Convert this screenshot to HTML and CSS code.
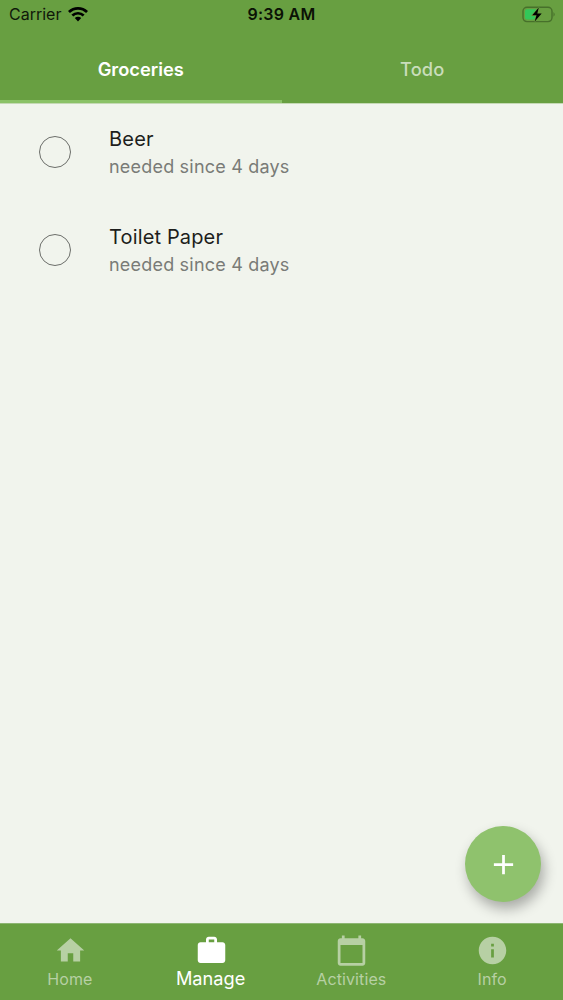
FILE: index.html
```html
<!DOCTYPE html>
<html lang="en">
<head>
<meta charset="utf-8">
<title>Groceries</title>
<link rel="stylesheet" href="styles.css">
</head>
<body>
<div class="app">
  <header class="header">
    <div class="status">
      <div class="carrier"><span class="carrier-name">Carrier</span>
        <svg class="wifi" viewBox="0 0 20 15"><path d="M0 4.1A14.3 14.3 0 0 1 20 4.1L18.1 6.1A11.5 11.5 0 0 0 1.9 6.1ZM3.4 7.6A9.5 9.5 0 0 1 16.6 7.6L14.7 9.5A6.7 6.7 0 0 0 5.3 9.5ZM6.8 11A4.6 4.6 0 0 1 13.2 11L10 14.5Z"/></svg>
      </div>
      <div class="clock">9:39 AM</div>
      <svg class="battery" viewBox="0 0 34 18"><rect class="battery-case" x="1" y="2.2" width="29" height="14.4" rx="4"/><rect class="battery-level" x="3" y="4.2" width="12" height="10.4" rx="2"/><path class="battery-tip" d="M31.5 7q2.4 2.4 0 4.8z"/><path class="bolt" d="M16.8 2.6 10.2 10.3h4.3l-1.8 6.1 7-7.9h-4.4z"/></svg>
    </div>
    <nav class="tabs"><a class="tab tab-active">Groceries</a><a class="tab">Todo</a></nav>
  </header>
  <main class="list">
    <div class="item"><span class="circle"></span><div><div class="title">Beer</div><div class="note">needed since 4 days</div></div></div>
    <div class="item"><span class="circle"></span><div><div class="title title-long">Toilet Paper</div><div class="note">needed since 4 days</div></div></div>
    <button class="fab" aria-label="Add"><svg viewBox="0 0 24 24"><path d="M19 13h-6v6h-2v-6H5v-2h6V5h2v6h6z"/></svg></button>
  </main>
  <nav class="bottom">
    <a class="dest"><svg viewBox="0 0 24 24"><path d="M10 20v-6h4v6h5v-8h3L12 3 2 12h3v8z"/></svg><span>Home</span></a>
    <a class="dest dest-active"><svg viewBox="0 0 24 24"><path d="M20 6h-4V4c0-1.11-.89-2-2-2h-4c-1.11 0-2 .89-2 2v2H4c-1.11 0-1.99.89-1.99 2L2 19c0 1.11.89 2 2 2h16c1.11 0 2-.89 2-2V8c0-1.11-.89-2-2-2zm-6 0h-4V4h4v2z"/></svg><span>Manage</span></a>
    <a class="dest"><svg viewBox="0 0 24 24"><path d="M20 3h-1V1h-2v2H7V1H5v2H4c-1.1 0-2 .9-2 2v16c0 1.1.9 2 2 2h16c1.1 0 2-.9 2-2V5c0-1.1-.9-2-2-2zm0 18H4V8h16v13z"/></svg><span>Activities</span></a>
    <a class="dest"><svg viewBox="0 0 24 24"><path d="M12 2C6.48 2 2 6.48 2 12s4.48 10 10 10 10-4.48 10-10S17.52 2 12 2zm1 15h-2v-6h2v6zm0-8h-2V7h2v2z"/></svg><span>Info</span></a>
  </nav>
</div>
</body>
</html>
```
FILE: styles.css
```css
* { box-sizing: border-box; }
body { margin: 0; font-family: Inter, sans-serif; }
.app { width: 563px; height: 1000px; display: flex; flex-direction: column; background: #f1f4ed; }
.header { height: 103px; background: #689f41; display: flex; flex-direction: column; box-shadow: 0 1px 0 #c5d9b5; z-index: 1; }
.status { height: 36px; padding: 0 7px 8px 9px; display: grid; grid-template-columns: 1fr auto 1fr; align-items: center; color: #10180a; }
.carrier { display: flex; align-items: center; gap: 7px; font-size: 16px; }
.wifi { width: 20px; height: 15px; fill: #000; }
.clock { font-size: 16px; font-weight: 600; letter-spacing: .25px; color: #0b1205; margin-right: 2px; }
.battery { width: 34px; height: 18px; justify-self: end; }
.battery-case { fill: none; stroke: #47702b; stroke-width: 1.4; }
.battery-level { fill: #33c759; }
.battery-tip { fill: #47702b; }
.bolt { fill: #000; stroke: #689f41; stroke-width: 1.4; paint-order: stroke; }
.tabs { flex: 1; display: flex; }
.tab { flex: 1; display: flex; align-items: center; justify-content: center; border-bottom: 3px solid transparent; padding-top: 2px; font-size: 18.3px; font-weight: 600; color: #c9ddbb; }
.tab:last-child { font-weight: 500; letter-spacing: .1px; }
.tab-active { color: #fff; border-color: #8bc267; }
.list { flex: 1; position: relative; }
.item { height: 98px; padding-left: 39px; display: flex; align-items: center; gap: 38px; }
.circle { width: 32px; height: 32px; border: 1.5px solid #6c6e6a; border-radius: 50%; }
.title { font-size: 20px; line-height: 28px; letter-spacing: .2px; color: #1d1e1c; padding-top: 2px; }
.title-long { letter-spacing: .15px; }
.note { font-size: 18px; line-height: 28px; letter-spacing: .2px; color: #797b77; }
.fab { position: absolute; right: 22px; bottom: 21px; width: 76px; height: 76px; padding: 0; border: 0; border-radius: 50%; background: #8fc26d; box-shadow: 3px 7px 13px rgba(0,0,0,.3); display: flex; align-items: center; justify-content: center; }
.fab svg { width: 33px; height: 33px; fill: #fff; }
.bottom { height: 77px; background: #689f41; display: flex; border-top: 1px solid #8db572; z-index: 1; }
.dest { flex: 1; padding-top: 10px; display: flex; flex-direction: column; align-items: center; color: #b7d0a4; font-size: 16px; letter-spacing: .1px; line-height: 24px; }
.dest svg { width: 33px; height: 33px; fill: currentColor; }
.dest span { margin-right: 1px; }
.dest-active { color: #fff; font-size: 18.2px; letter-spacing: 0; }
.dest-active span { line-height: 22px; }
```
